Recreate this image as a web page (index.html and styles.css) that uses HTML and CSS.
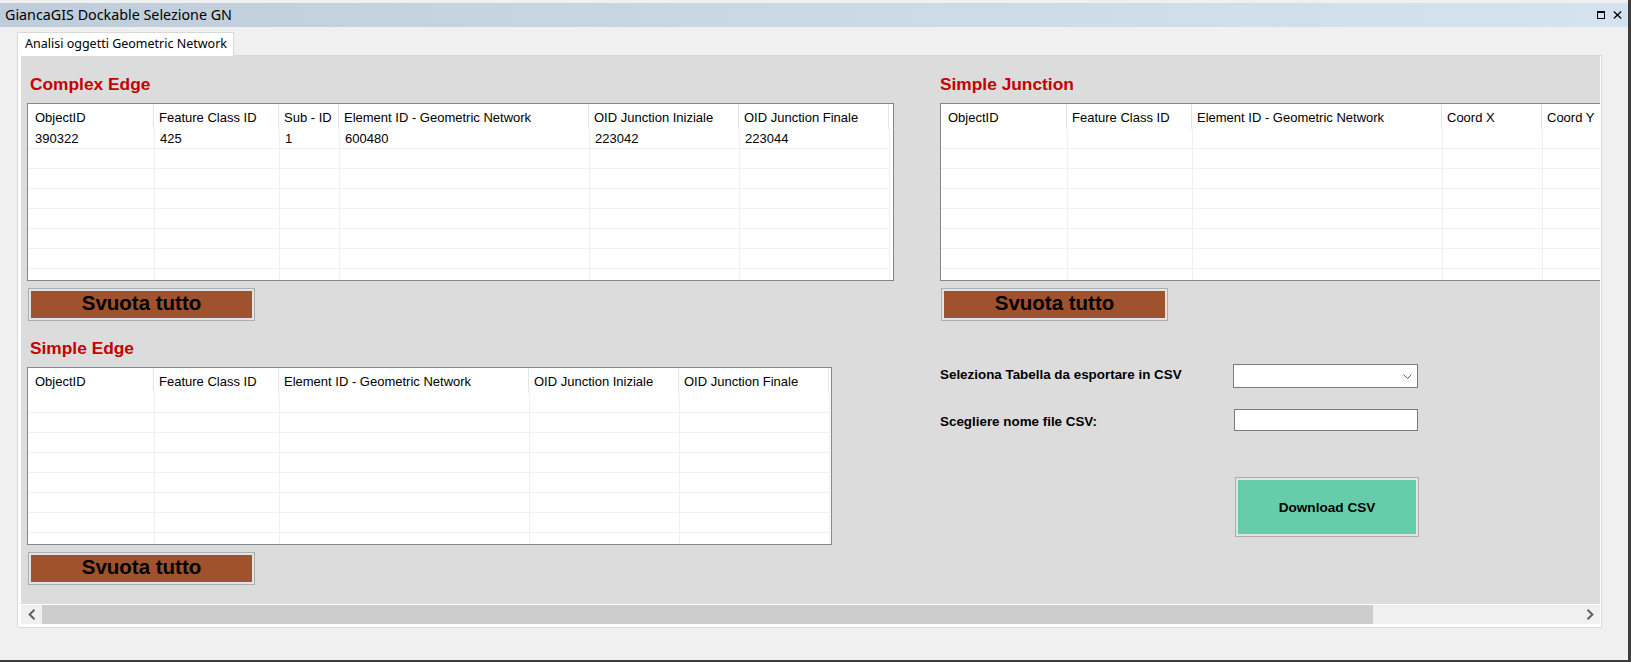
FILE: index.html
```html
<!DOCTYPE html>
<html lang="it">
<head>
<meta charset="utf-8">
<title>GiancaGIS Dockable Selezione GN</title>
<link rel="stylesheet" href="styles.css">
</head>
<body>
<div class="window">
  <div class="titlebar">
    <span class="title">GiancaGIS Dockable Selezione GN</span>
    <div class="tb-icons">
      <svg class="tb-icon" width="8" height="8" viewBox="0 0 8 8"><rect x="0.5" y="0.5" width="7" height="7" fill="none" stroke="#000" stroke-width="1"/><line x1="0" y1="1.5" x2="8" y2="1.5" stroke="#000" stroke-width="1"/></svg>
      <svg class="tb-icon" width="9" height="8" viewBox="0 0 9 8"><line x1="0.8" y1="0.6" x2="8.2" y2="7.4" stroke="#000" stroke-width="1.3"/><line x1="8.2" y1="0.6" x2="0.8" y2="7.4" stroke="#000" stroke-width="1.3"/></svg>
    </div>
  </div>

  <div class="tabs">
    <div class="tab">Analisi oggetti Geometric Network</div>
  </div>

  <div class="tabpage">
    <div class="panel">
      <div class="content">
        <div class="col-left">
          <h2 class="sec-title sec-title--left">Complex Edge</h2>
          <div class="dgv dgv--complex">
            <div class="dcol w127 first"><div class="hc">ObjectID</div><div class="body"><div class="dc">390322</div></div></div>
            <div class="dcol w125"><div class="hc">Feature Class ID</div><div class="body"><div class="dc">425</div></div></div>
            <div class="dcol w60"><div class="hc">Sub - ID</div><div class="body"><div class="dc">1</div></div></div>
            <div class="dcol w250"><div class="hc">Element ID - Geometric Network</div><div class="body"><div class="dc">600480</div></div></div>
            <div class="dcol w150"><div class="hc">OID Junction Iniziale</div><div class="body"><div class="dc">223042</div></div></div>
            <div class="dcol w150"><div class="hc">OID Junction Finale</div><div class="body"><div class="dc">223044</div></div></div>
          </div>
          <button class="btn btn-clear">Svuota tutto</button>

          <h2 class="sec-title sec-title--left sec-title--second">Simple Edge</h2>
          <div class="dgv dgv--simple-edge">
            <div class="dcol w127 first"><div class="hc">ObjectID</div><div class="body"></div></div>
            <div class="dcol w125"><div class="hc">Feature Class ID</div><div class="body"></div></div>
            <div class="dcol w250"><div class="hc">Element ID - Geometric Network</div><div class="body"></div></div>
            <div class="dcol w150"><div class="hc">OID Junction Iniziale</div><div class="body"></div></div>
            <div class="dcol w150"><div class="hc">OID Junction Finale</div><div class="body"></div></div>
          </div>
          <button class="btn btn-clear">Svuota tutto</button>
        </div>

        <div class="col-right">
          <h2 class="sec-title">Simple Junction</h2>
          <div class="dgv dgv--junction">
            <div class="dcol w127 first"><div class="hc">ObjectID</div><div class="body"></div></div>
            <div class="dcol w125"><div class="hc">Feature Class ID</div><div class="body"></div></div>
            <div class="dcol w250"><div class="hc">Element ID - Geometric Network</div><div class="body"></div></div>
            <div class="dcol w100"><div class="hc">Coord X</div><div class="body"></div></div>
            <div class="dcol w100"><div class="hc">Coord Y</div><div class="body"></div></div>
          </div>
          <button class="btn btn-clear">Svuota tutto</button>

          <div class="export">
            <div class="frow">
              <span class="flabel flabel--combo">Seleziona Tabella da esportare in CSV</span>
              <div class="combo">
                <svg class="combo-arrow" width="9" height="5" viewBox="0 0 9 5"><polyline points="0.5,0.5 4.5,4.5 8.5,0.5" fill="none" stroke="#5a5a5a" stroke-width="1"/></svg>
              </div>
            </div>
            <div class="frow frow--second">
              <span class="flabel flabel--text">Scegliere nome file CSV:</span>
              <div class="textbox"></div>
            </div>
            <button class="btn btn-download">Download CSV</button>
          </div>
        </div>
      </div>

      <div class="hscroll">
        <div class="sb-btn">
          <svg width="8" height="11" viewBox="0 0 8 11"><polyline points="6.5,0.8 1.6,5.5 6.5,10.2" fill="none" stroke="#606060" stroke-width="2"/></svg>
        </div>
        <div class="sb-track"><div class="sb-thumb"></div></div>
        <div class="sb-btn">
          <svg width="8" height="11" viewBox="0 0 8 11"><polyline points="1.5,0.8 6.4,5.5 1.5,10.2" fill="none" stroke="#606060" stroke-width="2"/></svg>
        </div>
      </div>
    </div>
  </div>
</div>
</body>
</html>
```

FILE: styles.css
```css
* {
  box-sizing: border-box;
}

html,
body {
  margin: 0;
  padding: 0;
}

body {
  width: 1631px;
  height: 662px;
  overflow: hidden;
  background: #f0f0f0;
  font-family: "Liberation Sans", Arial, sans-serif;
  color: #000;
}

.window {
  width: 1631px;
  height: 662px;
  padding-top: 3px;
  background: #f0f0f0;
  border-right: 3px solid #3c3c3c;
  border-bottom: 2px solid #3c3c3c;
}

/* ---------- title bar ---------- */
.titlebar {
  height: 24px;
  display: flex;
  align-items: center;
  justify-content: space-between;
  padding: 0 6px 0 5px;
  background: linear-gradient(90deg, #bfcddb 0%, #cbd9e6 50%, #d5e3f0 100%);
}

.title {
  font-family: "Noto Sans", "Open Sans", sans-serif;
  font-size: 14.3px;
  line-height: 18px;
  color: #000;
}

.tb-icons {
  display: flex;
  align-items: center;
  gap: 8px;
}

.tb-icon {
  display: block;
}

/* ---------- tab strip ---------- */
.tabs {
  display: flex;
  margin-top: 5px;
  padding-left: 17px;
}

.tab {
  position: relative;
  z-index: 1;
  width: 217px;
  height: 24px;
  margin-bottom: -1px;
  padding: 0 0 2px 7px;
  display: flex;
  align-items: center;
  background: #fff;
  border: 1px solid #d9d9d9;
  border-bottom: none;
  font-family: "Noto Sans", "Open Sans", sans-serif;
  font-size: 12.5px;
  color: #000;
}

.tabpage {
  margin-left: 17px;
  width: 1585px;
  background: #fff;
  border: 1px solid #d9d9d9;
  padding: 0 1px 3px 3px;
}

.panel {
  height: 568px;
  display: flex;
  flex-direction: column;
  background: #dcdcdc;
}

.content {
  height: 548px;
  flex: none;
  overflow: hidden;
  display: flex;
  padding: 18px 0 0 6px;
}

.col-left {
  flex: none;
  width: 913px;
}

.col-right {
  flex: none;
  width: 900px;
}

/* ---------- section titles ---------- */
.sec-title {
  margin: 0;
  font-family: "Liberation Sans", Arial, sans-serif;
  font-weight: bold;
  font-size: 17.33px;
  line-height: 20px;
  color: #c40000;
}

.sec-title--left {
  padding-left: 3px;
}

.sec-title--second {
  margin-top: 17px;
}

/* ---------- data grid ---------- */
.dgv {
  display: flex;
  height: 178px;
  margin-top: 9px;
  overflow: hidden;
  background: #fff;
  border: 1px solid #828790;
}

.dgv--complex {
  width: 867px;
}

.dgv--simple-edge {
  width: 805px;
}

.dgv--junction {
  width: 900px;
}

.dcol {
  flex: none;
  display: flex;
  flex-direction: column;
}

.w127 { width: 127px; }
.w125 { width: 125px; }
.w60 { width: 60px; }
.w250 { width: 250px; }
.w150 { width: 150px; }
.w100 { width: 100px; }

.hc {
  flex: none;
  height: 25px;
  margin-right: 1px;
  padding: 4px 0 0 4px;
  font-size: 13px;
  line-height: 19px;
  white-space: nowrap;
  overflow: hidden;
  background: #fff;
  border-right: 1px solid #e5e5e5;
}

.body {
  flex: 1;
  border-right: 1px solid #f0f0f0;
  background: repeating-linear-gradient(to bottom, #fff 0, #fff 19px, #f0f0f0 19px, #f0f0f0 20px);
}

.dc {
  height: 19px;
  padding: 1px 0 0 5px;
  font-size: 13px;
  line-height: 18px;
  white-space: nowrap;
}

.first .hc {
  padding-left: 7px;
}

.first .dc {
  padding-left: 7px;
}

/* ---------- buttons ---------- */
.btn {
  appearance: none;
  display: flex;
  align-items: center;
  justify-content: center;
  padding: 0;
  border: 1px solid #adadad;
  box-shadow: inset 0 0 0 2px #e3e3e3;
  font-family: "Liberation Sans", Arial, sans-serif;
  font-weight: bold;
  color: #000;
}

.btn-clear {
  width: 227px;
  height: 33px;
  margin: 7px 0 0 1px;
  padding-bottom: 3px;
  background: #a0522d;
  font-size: 20.5px;
}

.btn-download {
  width: 184px;
  height: 60px;
  margin: 46px 0 0 295px;
  background: #66cdaa;
  font-size: 13.6px;
}

/* ---------- export form ---------- */
.export {
  margin-top: 43px;
}

.frow {
  display: flex;
}

.frow--second {
  margin-top: 21px;
}

.flabel {
  flex: none;
  font-weight: bold;
  font-size: 13.4px;
  line-height: 16px;
  white-space: nowrap;
}

.flabel--combo {
  width: 293px;
  padding-top: 3px;
}

.flabel--text {
  width: 294px;
  padding-top: 5px;
}

.combo {
  width: 185px;
  height: 24px;
  display: flex;
  align-items: center;
  justify-content: flex-end;
  padding-right: 5px;
  background: #fff;
  border: 1px solid #7a7a7a;
}

.combo-arrow {
  display: block;
}

.textbox {
  width: 184px;
  height: 22px;
  background: #fff;
  border: 1px solid #7a7a7a;
}

/* ---------- horizontal scrollbar ---------- */
.hscroll {
  flex: none;
  height: 20px;
  display: flex;
  background: #f0f0f0;
  border-top: 1px solid #fff;
}

.sb-btn {
  flex: none;
  width: 21px;
  display: flex;
  align-items: center;
  justify-content: center;
}

.sb-btn svg {
  display: block;
}

.sb-track {
  flex: 1;
  display: flex;
}

.sb-thumb {
  width: 1331px;
  background: #cdcdcd;
}
```
